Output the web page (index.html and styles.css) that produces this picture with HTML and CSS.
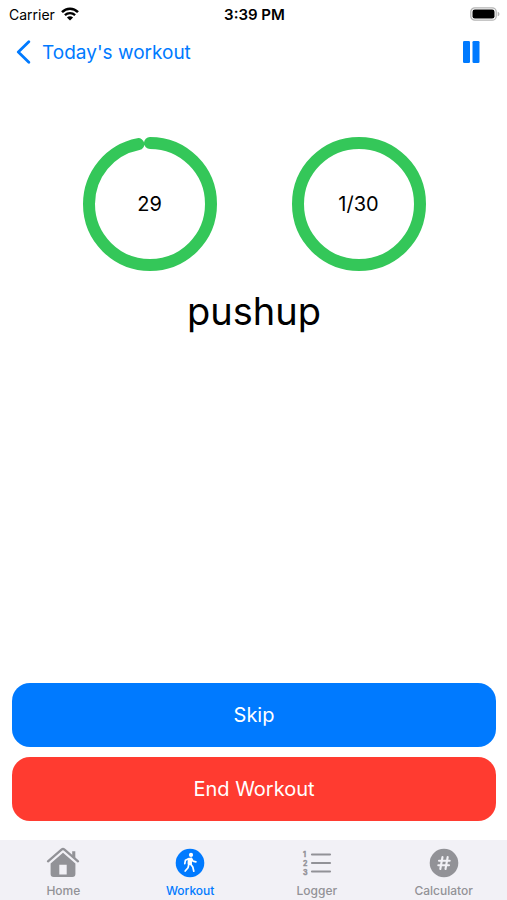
FILE: index.html
```html
<!DOCTYPE html>
<html lang="en">
<head>
<meta charset="utf-8">
<meta name="viewport" content="width=device-width, initial-scale=1">
<title>Today's workout</title>
<link rel="stylesheet" href="styles.css">
</head>
<body>
<div class="app">
  <div class="status">
    <div class="carrier">
      <span>Carrier</span>
      <svg width="18" height="14" viewBox="0 0 18 14" aria-hidden="true">
        <path d="M1 5.200C5.500 .6 12.500 .6 17 5.200" fill="none" stroke="#000" stroke-width="2.500"/>
        <path d="M3.900 8.200C6.800 5.400 11.200 5.400 14.100 8.200" fill="none" stroke="#000" stroke-width="2.300"/>
        <path d="M9 13.600L5.900 10.500C7.600 8.900 10.400 8.900 12.100 10.500Z"/>
      </svg>
    </div>
    <span class="clock">3:39 PM</span>
    <svg class="battery" width="30" height="14" viewBox="0 0 30 14" aria-hidden="true">
      <rect x=".8" y=".8" width="25.400" height="12.400" rx="4" fill="#fff" stroke="#b4b4b4" stroke-width="1.300"/>
      <rect x="2.500" y="2.400" width="22" height="9.200" rx="2.300"/>
      <path d="M27.700 4.700C30 5.400 30 8.600 27.700 9.300Z" fill="#b4b4b4"/>
    </svg>
  </div>
  <header class="nav">
    <a class="back" href="#">
      <svg width="15" height="24" viewBox="0 0 15 24" aria-hidden="true"><path d="M12.800 1.800L2.300 12L12.800 22.200" fill="none" stroke="currentColor" stroke-width="2.800" stroke-linecap="round" stroke-linejoin="round"/></svg>
      <span>Today's workout</span>
    </a>
    <button class="pause" type="button" aria-label="Pause">
      <svg width="17" height="22" viewBox="0 0 17 22" aria-hidden="true"><rect x="0" y="0" width="7" height="22" rx="1.300" fill="currentColor"/><rect x="9.500" y="0" width="7" height="22" rx="1.300" fill="currentColor"/></svg>
    </button>
  </header>
  <main class="main">
    <div class="rings">
      <div class="ring">
        <svg viewBox="0 0 134 134" aria-hidden="true"><circle cx="67" cy="67" r="61" pathLength="360" stroke-dasharray="349 11" transform="rotate(-90 67 67)"/></svg>
        <span>29</span>
      </div>
      <div class="ring">
        <svg viewBox="0 0 134 134" aria-hidden="true"><circle cx="67" cy="67" r="61"/></svg>
        <span>1/30</span>
      </div>
    </div>
    <h1 class="exercise">pushup</h1>
    <div class="actions">
      <button class="action skip" type="button">Skip</button>
      <button class="action end" type="button">End Workout</button>
    </div>
  </main>
  <nav class="tabs">
    <a class="tab" href="#">
      <svg width="34" height="32" viewBox="0 0 34 32" aria-hidden="true">
        <path d="M2 15.300L15.500 3.600Q17 2.400 18.500 3.600L32 15.300" fill="none" stroke="currentColor" stroke-width="2.300" stroke-linecap="round"/>
        <path d="M26.200 5.200H29.300V12.300L26.200 9.600Z" fill="currentColor"/>
        <path fill-rule="evenodd" d="M17 6.800L29.400 17.500V28Q29.400 31 26.400 31H7.600Q4.600 31 4.600 28V17.500ZM13.300 18.700V28.600H20.700V18.700Z" fill="currentColor"/>
      </svg>
      <span>Home</span>
    </a>
    <a class="tab active" href="#" aria-current="page">
      <svg width="34" height="32" viewBox="0 0 34 32" aria-hidden="true">
        <circle cx="17" cy="17" r="14.300" fill="currentColor"/>
        <circle cx="18" cy="8.900" r="2.100" fill="#fff"/>
        <path d="M15.500 12.700L18.300 12.200L18.200 18.500L15.300 18Z" fill="#fff" stroke="#fff" stroke-width="1.500" stroke-linejoin="round"/>
        <path d="M15.600 12.700L12.400 14.300L11.800 17.600M18.600 12.600L20 15.200L22.900 15.900M15.800 18.500L15 21.700L12.200 25M17.600 18L19.800 21L20.800 25.200" fill="none" stroke="#fff" stroke-width="1.700" stroke-linecap="round" stroke-linejoin="round"/>
      </svg>
      <span>Workout</span>
    </a>
    <a class="tab" href="#">
      <svg class="list" width="34" height="32" viewBox="0 0 34 32" aria-hidden="true">
        <path d="M12 8.500H30M12 17H30M12 25.500H30" fill="none" stroke="currentColor" stroke-width="2.200" stroke-linecap="round"/>
        <text x="3" y="11">1</text><text x="3" y="20">2</text><text x="3" y="29">3</text>
      </svg>
      <span>Logger</span>
    </a>
    <a class="tab" href="#">
      <svg width="34" height="32" viewBox="0 0 34 32" aria-hidden="true">
        <circle cx="17" cy="17" r="14.300" fill="currentColor"/>
        <path d="M15.500 11L13.300 23M20.700 11L18.500 23M12 14.700H22.700M11.300 19.300H22" fill="none" stroke="#f2f1f6" stroke-width="2.100" stroke-linecap="round"/>
      </svg>
      <span>Calculator</span>
    </a>
  </nav>
</div>
</body>
</html>
```
FILE: styles.css
```css
* { box-sizing: border-box; }
body {
  margin: 0;
  background: #fff;
  color: #000;
  font-family: Inter, "Liberation Sans", sans-serif;
}
button { border: 0; padding: 0; font: inherit; cursor: pointer; }
a { color: inherit; text-decoration: none; }
svg { display: block; }
.app { min-height: 100vh; display: flex; flex-direction: column; }

.status {
  display: grid;
  grid-template-columns: 1fr auto 1fr;
  align-items: center;
  height: 28px;
  padding: 0 7px 0 9px;
  font-size: 14px;
}
.carrier { display: flex; align-items: center; gap: 6px; }
.clock { font-size: 15px; font-weight: 600; }
.battery { justify-self: end; }

.nav {
  display: flex;
  align-items: center;
  justify-content: space-between;
  height: 48px;
  padding: 0 27px 0 16px;
  color: #007aff;
}
.back { display: flex; align-items: center; gap: 11px; font-size: 19px; }
.pause { background: none; color: inherit; }

.main { flex: 1; display: flex; flex-direction: column; padding: 61px 11px 19px 12px; }
.rings { display: flex; justify-content: center; gap: 75px; }
.ring { display: grid; place-items: center; width: 134px; font-size: 20px; }
.ring > * { grid-area: 1 / 1; }
.ring svg { width: 100%; }
.ring circle { fill: none; stroke: #34c759; stroke-width: 12; stroke-linecap: round; }
.exercise { margin: 16px 0; font-size: 38px; line-height: 48px; font-weight: 400; text-align: center; }
.actions { display: grid; gap: 10px; margin-top: auto; }
.action { height: 64px; border-radius: 18px; color: #fff; font-size: 20px; }
.skip { background: #007aff; }
.end { background: #ff3b30; }

.tabs {
  display: grid;
  grid-template-columns: repeat(4, 1fr);
  height: 60px;
  padding-top: 6px;
  background: #f2f1f6;
  color: #929297;
}
.tab {
  display: flex;
  flex-direction: column;
  align-items: center;
  gap: 5px;
  font-size: 12px;
  line-height: 16px;
  font-weight: 500;
}
.active { color: #007aff; }
.list text { fill: currentColor; stroke: currentColor; stroke-width: 0.4px; font-size: 7px; font-weight: 700; }
```
